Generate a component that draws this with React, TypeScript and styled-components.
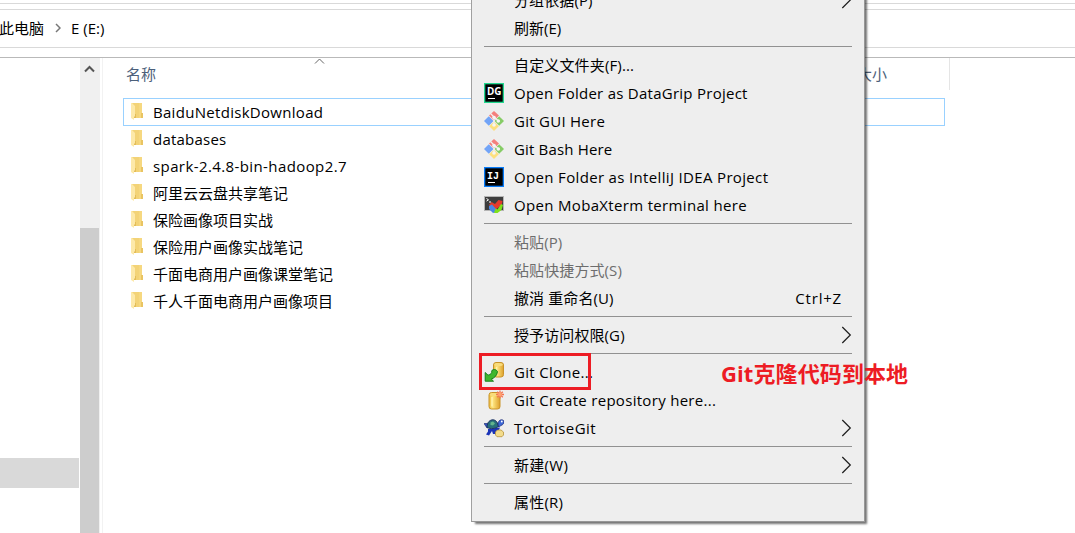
import React from "react";
import styled, { createGlobalStyle } from "styled-components";

const GlobalStyle = createGlobalStyle`
  html, body { margin: 0; padding: 0; background: #fff; overflow: hidden; }
  * { box-sizing: border-box; }
`;

const Window = styled.div`
  position: relative;
  width: 1075px;
  height: 533px;
  overflow: hidden;
  display: flex;
  flex-direction: column;
  background: #fff;
  color: #000;
  font: 15px/20px "Open Sans", "Noto Sans CJK SC", sans-serif;
  white-space: nowrap;
`;

const RibbonEdge = styled.div`
  flex: none;
  height: 10px;
  border-bottom: 1px solid #d9d9d9;
  padding-top: 3px;
  &::before { content: ""; display: block; height: 1px; background: #d9d9d9; }
`;

const AddressBar = styled.div`
  flex: none;
  height: 38px;
  display: flex;
  align-items: center;
  padding-bottom: 2px;
  margin-left: -1px;
  border-bottom: 1px solid #d9d9d9;
`;

const CrumbArrow = styled.svg`
  flex: none;
  margin: 0 10px 0 11px;
`;

const Body = styled.div`
  flex: 1;
  display: flex;
  margin-top: 9px;
  border-top: 1px solid #b9b9b9;
`;

const NavPane = styled.div`
  width: 80px;
  padding: 400px 1px 0 0;
`;

const NavSelection = styled.div`
  height: 30px;
  background: #d9d9d9;
`;

const Scrollbar = styled.div`
  width: 20px;
  display: flex;
  flex-direction: column;
  background: #f0f0f0;
`;

const ScrollUp = styled.div`
  height: 170px;
  padding: 7px 0 0 4px;
  svg { display: block; }
`;

const Thumb = styled.div`
  flex: 1;
  width: 19px;
  background: #cdcdcd;
`;

const FilePane = styled.div`
  flex: 1;
  margin-left: 2px;
  border-left: 1px solid #f2f2f2;
`;

const Header = styled.div`
  position: relative;
  height: 32px;
  width: 847px;
  display: flex;
  align-items: center;
  border-right: 1px solid #e5e5e5;
  color: #4c607a;
`;

const NameColumn = styled.div`
  width: 754px;
  padding-left: 23px;
`;

const SortMark = styled.svg`
  position: absolute;
  left: 211px;
  top: 0;
`;

const FileList = styled.div`
  margin: 8px 0 0 20px;
  width: 822px;
`;

const FileRow = styled.div<{ $focused?: boolean }>`
  height: ${(p) => (p.$focused ? 28 : 27)}px;
  margin-bottom: ${(p) => (p.$focused ? -1 : 0)}px;
  display: flex;
  align-items: center;
  padding-left: ${(p) => (p.$focused ? 6 : 7)}px;
  border: ${(p) => (p.$focused ? "1px solid #99d1ff" : "none")};
  svg { margin-top: ${(p) => (p.$focused ? 0 : 1)}px; }
`;

const FileName = styled.span<{ $spacing?: number }>`
  margin-left: 7px;
  letter-spacing: ${(p) => p.$spacing ?? 0}px;
`;

const Menu = styled.div`
  position: absolute;
  left: 471px;
  top: -15px;
  width: 394px;
  height: 537px;
  padding: 0 12px;
  background: #eeeeee;
  border: 1px solid #a0a0a0;
  border-right-color: #979797;
  border-bottom-color: #979797;
  box-shadow: 3px 3px 2px -1px rgba(0, 0, 0, 0.55);
`;

const MenuRow = styled.div<{ $disabled?: boolean }>`
  height: 28px;
  display: flex;
  align-items: center;
  color: ${(p) => (p.$disabled ? "#6d6d6d" : "#000")};
`;

const IconSlot = styled.span`
  width: 20px;
  height: 20px;
  margin-right: 10px;
  svg { display: block; }
`;

const Label = styled.span<{ $spacing?: number }>`
  flex: 1;
  letter-spacing: ${(p) => p.$spacing ?? 0}px;
`;

const Shortcut = styled.span`
  margin-right: 10px;
  letter-spacing: 0.8px;
`;

const Separator = styled.div`
  height: 9px;
  padding-top: 4px;
  &::before { content: ""; display: block; height: 1px; background: #919191; }
`;

const Highlight = styled.div`
  position: absolute;
  left: 479px;
  top: 353px;
  width: 112px;
  height: 37px;
  border: 3px solid #ed1c24;
`;

const Note = styled.div`
  position: absolute;
  left: 721px;
  top: 357px;
  font: bold 22px/32px "Open Sans", "Noto Sans CJK SC", sans-serif;
  letter-spacing: 0.1px;
  color: #ed1c24;
`;

const FolderIcon = () => (
  <svg width="16" height="20" viewBox="0 0 16 20">
    <rect x="2" y="1" width="10" height="15" fill="#f3d377" />
    <rect x="9" y="1" width="3" height="15" fill="#f6d880" />
    <path d="M11 11h2v5h-2z" fill="#e9c462" />
    <path d="M4 12h2v4H4z" fill="#e3bd58" />
    <path d="M1 1h1l3 3v10l-1 1v3L1 16z" fill="#fde9a9" />
  </svg>
);

const JetBrainsIcon = ({ text, edge }: { text: string; edge: string }) => (
  <svg width="20" height="20" viewBox="0 0 20 20">
    <rect width="20" height="20" fill={edge} />
    <rect x="1.300" y="1.300" width="17.400" height="17.400" fill="#000" />
    <text
      x="3"
      y="11.5"
      fill="#fff"
      fontSize={text === "IJ" ? 11.5 : 10.5}
      fontWeight="bold"
      fontFamily={text === "IJ" ? "Liberation Mono, monospace" : "Open Sans, sans-serif"}
      textLength={text === "IJ" ? 12 : 14.5}
      lengthAdjust="spacingAndGlyphs"
    >
      {text}
    </text>
    <rect x="4" y="15" width="7" height="1" fill="#fff" />
  </svg>
);

const GitIcon = () => (
  <svg width="20" height="20" viewBox="0 0 20 20">
    <path d="M10 0 15 4.600 10 9.500 5 4.600z" fill="#f4807c" />
    <path d="M15.200 5.200 20 10l-4.800 4.800L10.500 10z" fill="#86cc66" />
    <path d="M4.800 5.200 9.500 10l-4.700 4.800L0 10z" fill="#72a4f7" />
    <path d="M10 10.500l4.800 4.700L10 20l-4.800-4.800z" fill="#fde07e" />
    <path d="M6.500 2.500 10 6v8M10 6l4.500 4" stroke="#f1f1f1" strokeWidth="1.3" fill="none" />
    <circle cx="10" cy="6.500" r="1.8" fill="#f5f5f5" />
    <circle cx="10" cy="14" r="1.800" fill="#f5f5f5" />
    <circle cx="14.300" cy="10" r="1.800" fill="#f5f5f5" />
  </svg>
);

const MobaIcon = () => (
  <svg width="20" height="20" viewBox="0 0 20 20">
    <rect x=".5" y="1.500" width="19" height="14" fill="#3d3d3d" stroke="#b5b5b5" />
    <path d="M2.500 3.500l2 1.300-2 1.300M5 7h2" stroke="#fff" fill="none" />
    <path d="M5 10l2.500-3 3.500 2 3.500-4 4 1-1 4-5 4-3 0z" fill="#e5392c" />
    <path d="M5 11l3-1.500 4 4.500-1 3.500-2 .5-4-4z" fill="#4b86e4" />
    <path d="M10 18l1.500-4.500 2 1 3.500-5.500 2 1-1.500 5-4 3z" fill="#7fe11c" />
  </svg>
);

const Cylinder = ({ x, y, w, h }: { x: number; y: number; w: number; h: number }) => (
  <g>
    <rect x={x + 0.5} y={y + 0.5} width={w - 1} height={h - 1} rx="2.5" fill="url(#gold)" stroke="#c99328" />
    <ellipse cx={x + w / 2} cy={y + 2.6} rx={w / 2 - 1.2} ry="1.7" fill="#f8dc7c" />
    <path d={`M${x + 3.5} ${y + 5}v${h - 8}`} stroke="#fff3ac" strokeWidth="1.5" />
  </g>
);

const GoldGradient = () => (
  <defs>
    <linearGradient id="gold">
      <stop offset="0" stopColor="#edbd42" />
      <stop offset=".35" stopColor="#ffe680" />
      <stop offset="1" stopColor="#dda02b" />
    </linearGradient>
  </defs>
);

const CloneIcon = () => (
  <svg width="20" height="20" viewBox="0 0 20 20">
    <GoldGradient />
    <Cylinder x={9} y={0} w={11} h={15.5} />
    <path
      d="M1.200 10.500v8.700h8.300L7.300 17c3.200-1 5.700-3.500 6.200-7.500C12 7 9 7 7.500 9c1 2-1 3.500-3.500 4.200z"
      fill="#3fb72e"
      stroke="#147d1a"
    />
  </svg>
);

const CreateIcon = () => (
  <svg width="20" height="20" viewBox="0 0 20 20">
    <Cylinder x={4.5} y={2} w={12} h={17.5} />
    <path d="M16 .5v8M12 4.500h8M13.200 1.700l5.600 5.600M18.800 1.700l-5.600 5.600" stroke="#f47450" strokeWidth="1.300" />
    <circle cx="16" cy="4.500" r="2" fill="#ffa070" />
  </svg>
);

const TortoiseIcon = () => (
  <svg width="20" height="20" viewBox="0 0 20 20">
    <path d="M4 11l12-1.500-1 2.500-3 1 1 3H9l-1-3-3 4.500-3-1L4 13.500z" fill="#1b34b8" />
    <path d="M0 5.500h3.500l1 3.500L3 10z" fill="#3556c4" stroke="#14216d" strokeWidth=".6" />
    <path d="M3 9.500C3 4 6 1.800 9 1.800S14 5 14.500 8.500c-3 2.300-7.500 2.800-11.500 1z" fill="#28707a" stroke="#182a60" strokeWidth=".9" />
    <path d="M6.500 4.500 9 3.500l2 2-2 2-2.500-.5z" fill="#62b58c" />
    <path d="M14 6c0-5 6-5.500 6-2 0 2.500-2.500 3.200-5.500 5z" fill="#3f68d8" stroke="#14216d" strokeWidth=".7" />
    <circle cx="17.800" cy="3.500" r=".9" fill="#fff" />
    <path d="M11.500 14l2-2h3.500l2.500 2v3l-1.500 1.700h-5L11.500 17z" fill="#f3dc8c" stroke="#b8943c" strokeWidth=".8" />
  </svg>
);

const SubmenuArrow = () => (
  <svg width="11" height="18" viewBox="0 0 11 18">
    <path d="M1.300 1 9.300 9l-8 8" fill="none" stroke="#1a1a1a" strokeWidth="1.200" />
  </svg>
);

type Item = {
  label: string;
  spacing?: number;
  icon?: React.ReactNode;
  shortcut?: string;
  submenu?: boolean;
  disabled?: boolean;
};

const groups: Item[][] = [
  [{ label: "分组依据(P)", submenu: true, spacing: 0.1 }, { label: "刷新(E)" }],
  [
    { label: "自定义文件夹(F)...", spacing: 0.15 },
    { label: "Open Folder as DataGrip Project", spacing: 0.26, icon: <JetBrainsIcon text="DG" edge="#22d88f" /> },
    { label: "Git GUI Here", spacing: 0.27, icon: <GitIcon /> },
    { label: "Git Bash Here", spacing: 0.17, icon: <GitIcon /> },
    { label: "Open Folder as IntelliJ IDEA Project", spacing: 0.34, icon: <JetBrainsIcon text="IJ" edge="#087cfa" /> },
    { label: "Open MobaXterm terminal here", spacing: 0.33, icon: <MobaIcon /> },
  ],
  [
    { label: "粘贴(P)", disabled: true, spacing: 0.1 },
    { label: "粘贴快捷方式(S)", disabled: true, spacing: 0.1 },
    { label: "撤消 重命名(U)", shortcut: "Ctrl+Z", spacing: 0.1 },
  ],
  [{ label: "授予访问权限(G)", submenu: true, spacing: 0.1 }],
  [
    { label: "Git Clone...", spacing: 0.3, icon: <CloneIcon /> },
    { label: "Git Create repository here...", spacing: 0.3, icon: <CreateIcon /> },
    { label: "TortoiseGit", spacing: 0.45, icon: <TortoiseIcon />, submenu: true },
  ],
  [{ label: "新建(W)", submenu: true, spacing: 0.3 }],
  [{ label: "属性(R)", spacing: 0.2 }],
];

const files: { name: string; spacing?: number }[] = [
  { name: "BaiduNetdiskDownload", spacing: 0.3 },
  { name: "databases", spacing: 0.22 },
  { name: "spark-2.4.8-bin-hadoop2.7", spacing: 0.4 },
  { name: "阿里云云盘共享笔记" },
  { name: "保险画像项目实战" },
  { name: "保险用户画像实战笔记" },
  { name: "千面电商用户画像课堂笔记" },
  { name: "千人千面电商用户画像项目" },
];

export default function App() {
  return (
    <Window>
      <GlobalStyle />
      <RibbonEdge />
      <AddressBar>
        <span>此电脑</span>
        <CrumbArrow width="6" height="10" viewBox="0 0 6 10">
          <path d="M1 1l4 4-4 4" fill="none" stroke="#777" strokeWidth="1.5" />
        </CrumbArrow>
        <span>E (E:)</span>
      </AddressBar>
      <Body>
        <NavPane>
          <NavSelection />
        </NavPane>
        <Scrollbar>
          <ScrollUp>
            <svg width="11" height="8" viewBox="0 0 11 8">
              <path d="M1 6.500 5.500 2 10 6.500" fill="none" stroke="#555" strokeWidth="2" />
            </svg>
          </ScrollUp>
          <Thumb />
        </Scrollbar>
        <FilePane>
          <Header>
            <NameColumn>名称</NameColumn>
            <span>大小</span>
            <SortMark width="11" height="7" viewBox="0 0 11 7">
              <path d="M1 5.500 5.500 1 10 5.500" fill="none" stroke="#666" />
            </SortMark>
          </Header>
          <FileList>
            {files.map((f, i) => (
              <FileRow key={f.name} $focused={i === 0}>
                <FolderIcon />
                <FileName $spacing={f.spacing}>{f.name}</FileName>
              </FileRow>
            ))}
          </FileList>
        </FilePane>
      </Body>
      <Menu>
        {groups.map((group, g) => (
          <React.Fragment key={g}>
            {g > 0 && <Separator />}
            {group.map((item) => (
              <MenuRow key={item.label} $disabled={item.disabled}>
                <IconSlot>{item.icon}</IconSlot>
                <Label $spacing={item.spacing}>{item.label}</Label>
                {item.shortcut && <Shortcut>{item.shortcut}</Shortcut>}
                {item.submenu && <SubmenuArrow />}
              </MenuRow>
            ))}
          </React.Fragment>
        ))}
      </Menu>
      <Highlight />
      <Note>Git克隆代码到本地</Note>
    </Window>
  );
}
